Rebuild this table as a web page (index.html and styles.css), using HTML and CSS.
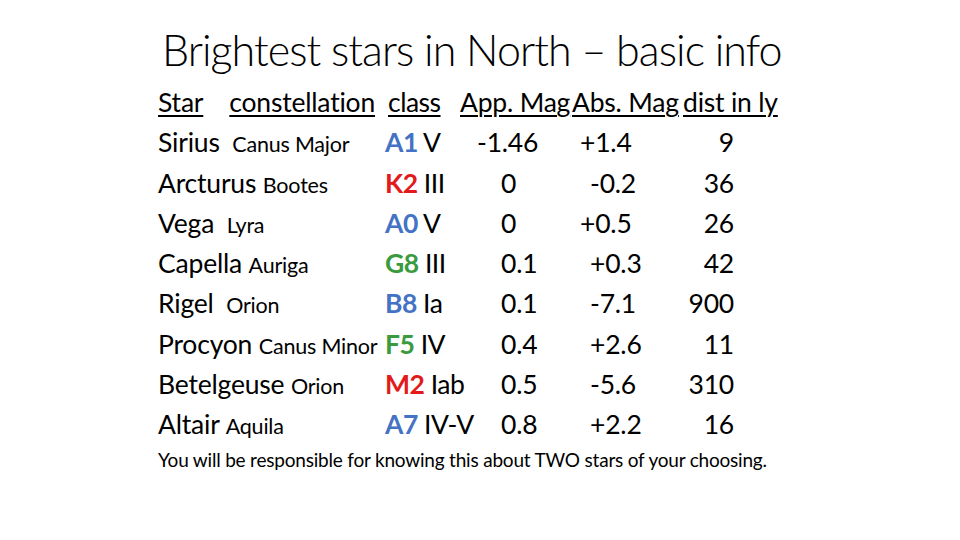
FILE: index.html
```html
<!DOCTYPE html>
<html lang="en">
<head>
  <meta charset="UTF-8" />
  <title>Brightest stars in North</title>
  <link rel="stylesheet" href="styles.css">
</head>
<body>
  <main class="slide">
    <h1 class="title">Brightest stars in North – basic info</h1>

    <div class="stars">
      <div class="row head">
        <div class="name"><u>Star</u><u class="con-head">constellation</u></div>
        <div class="cls"><u>class</u></div>
        <div class="app"><u>App. Mag</u></div>
        <div class="abs"><u>Abs. Mag</u></div>
        <div class="dist"><u>dist in ly</u></div>
      </div>

      <div class="row">
        <div class="name">Sirius <small class="wide">Canus Major</small></div>
        <div class="cls"><b class="blue">A1</b> V</div>
        <div class="app hang">-1.46</div>
        <div class="abs hang">+1.4</div>
        <div class="dist">9</div>
      </div>
      <div class="row">
        <div class="name">Arcturus <small>Bootes</small></div>
        <div class="cls"><b class="red">K2</b> III</div>
        <div class="app">0</div>
        <div class="abs">-0.2</div>
        <div class="dist">36</div>
      </div>
      <div class="row">
        <div class="name">Vega <small class="wide">Lyra</small></div>
        <div class="cls"><b class="blue">A0</b> V</div>
        <div class="app">0</div>
        <div class="abs hang">+0.5</div>
        <div class="dist">26</div>
      </div>
      <div class="row">
        <div class="name">Capella <small>Auriga</small></div>
        <div class="cls"><b class="green">G8</b> III</div>
        <div class="app">0.1</div>
        <div class="abs">+0.3</div>
        <div class="dist">42</div>
      </div>
      <div class="row">
        <div class="name">Rigel <small class="wide">Orion</small></div>
        <div class="cls"><b class="blue">B8</b> Ia</div>
        <div class="app">0.1</div>
        <div class="abs">-7.1</div>
        <div class="dist">900</div>
      </div>
      <div class="row">
        <div class="name">Procyon <small>Canus Minor</small></div>
        <div class="cls"><b class="green">F5</b> IV</div>
        <div class="app">0.4</div>
        <div class="abs">+2.6</div>
        <div class="dist">11</div>
      </div>
      <div class="row">
        <div class="name">Betelgeuse <small>Orion</small></div>
        <div class="cls"><b class="red">M2</b> Iab</div>
        <div class="app">0.5</div>
        <div class="abs">-5.6</div>
        <div class="dist">310</div>
      </div>
      <div class="row">
        <div class="name">Altair <small>Aquila</small></div>
        <div class="cls"><b class="blue">A7</b> IV-V</div>
        <div class="app">0.8</div>
        <div class="abs">+2.2</div>
        <div class="dist">16</div>
      </div>
    </div>

    <p class="note">You will be responsible for knowing this about TWO stars of your choosing.</p>
  </main>
</body>
</html>
```

FILE: styles.css
```css
* {
  margin: 0;
  padding: 0;
  box-sizing: border-box;
}
body {
  background: #fff;
  color: #000;
  font-family: Lato, "Open Sans", sans-serif;
}
.slide {
  width: 960px;
  height: 540px;
  padding: 23px 0 0 158px;
}
.title {
  font-weight: 300;
  font-size: 43px;
  line-height: 54px;
  margin-left: 4px;
  letter-spacing: -0.95px;
}
.stars {
  margin-top: 5px;
  font-size: 26.5px;
  letter-spacing: -0.2px;
}
.row {
  display: grid;
  grid-template-columns: 226px 76px 112px 111px 97px;
  height: 40.25px;
  line-height: 40px;
  white-space: nowrap;
}
.row small {
  font-size: 21.5px;
}
.row small.wide {
  margin-left: 6px;
}
.row b {
  font-weight: 700;
}
.con-head {
  margin-left: 26px;
}
.head .cls {
  padding-left: 4px;
}
.head .app,
.head .abs,
.head .dist {
  padding-left: 0;
}
.cls {
  padding-left: 1px;
  letter-spacing: -0.5px;
}
.app {
  padding-left: 41px;
}
.app.hang {
  padding-left: 17px;
}
.abs {
  padding-left: 18px;
}
.abs.hang {
  padding-left: 8px;
}
.dist {
  text-align: right;
  padding-right: 46px;
}
.head .dist {
  text-align: left;
}
.head u {
  text-decoration-thickness: 2px;
  text-underline-offset: 3px;
}
.blue {
  color: #4472c4;
}
.red {
  color: #e21a1a;
}
.green {
  color: #3a9a3e;
}
.note {
  margin-top: 4px;
  font-size: 19px;
  letter-spacing: -0.2px;
}
```
